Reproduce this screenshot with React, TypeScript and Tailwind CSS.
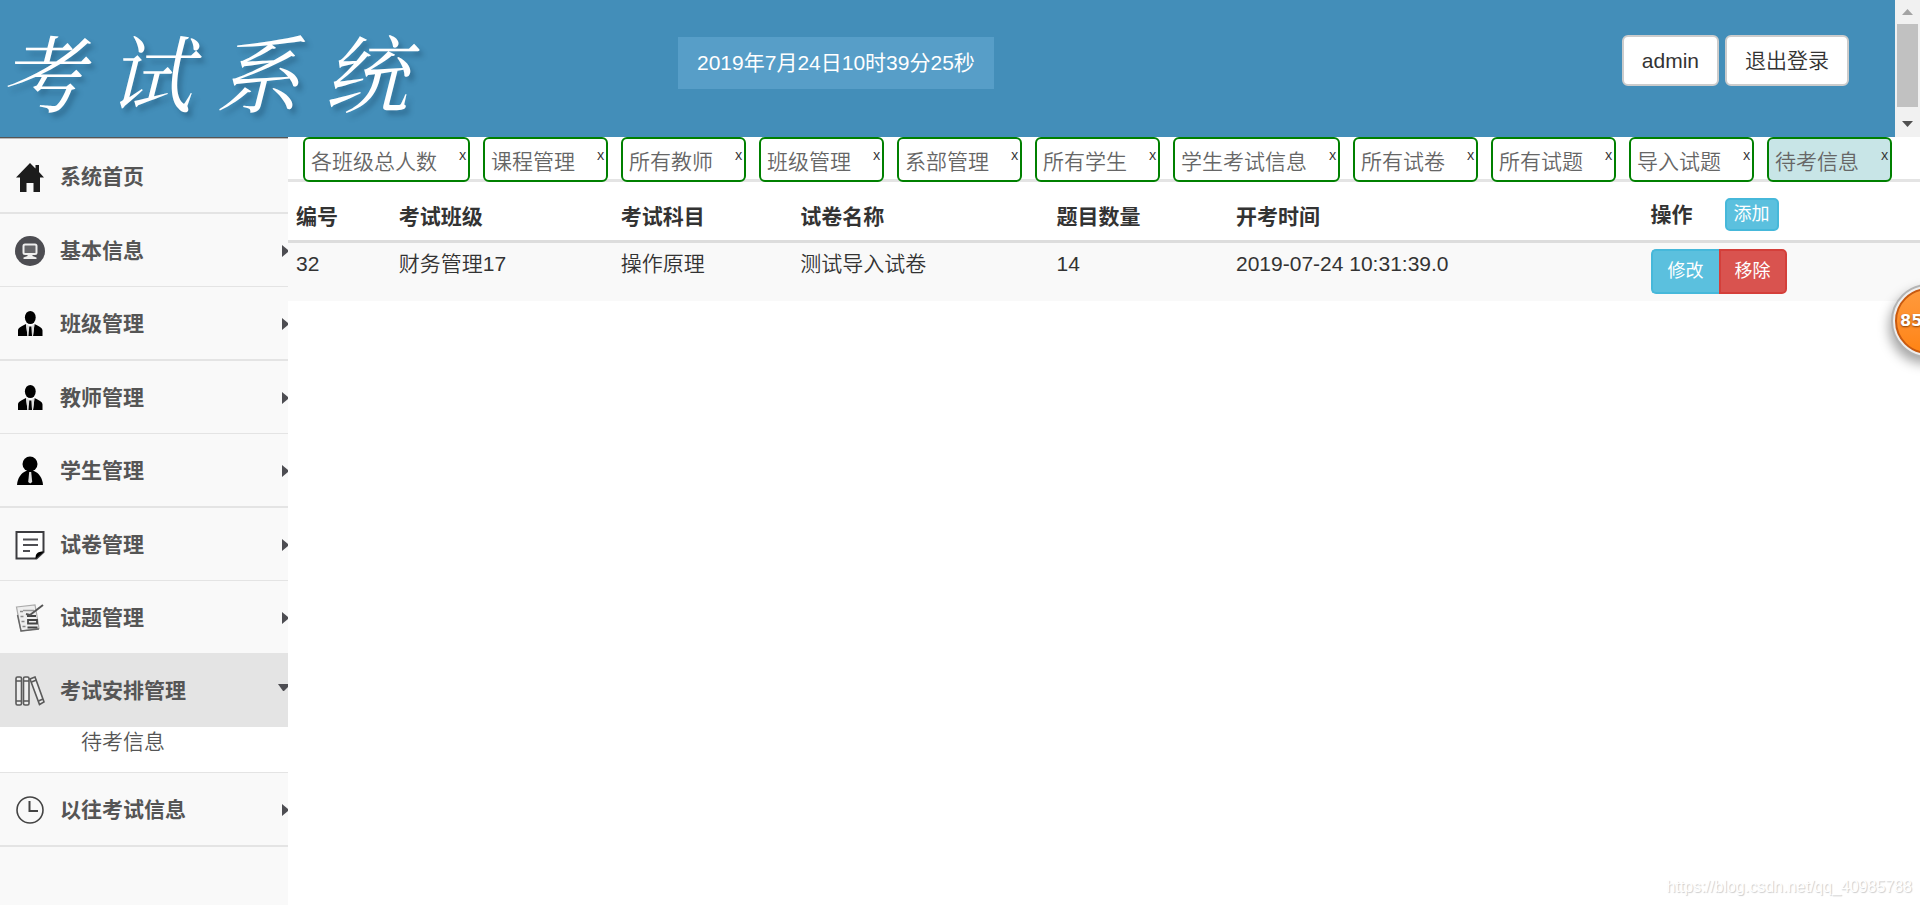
import { ReactNode } from "react";

const ink = "#4d4d52";

function HomeIcon() {
  return (
    <svg viewBox="0 0 30 30" className="size-[30px]" aria-hidden="true">
      <path d="M15 1 1 15.500h4V30h6.500v-9h7v9H25V15.500h4L24 10V3h-3.500v3.500z" fill="#1c1c1c" />
    </svg>
  );
}

function ComputerIcon() {
  return (
    <svg viewBox="0 0 30 30" className="size-[30px]" aria-hidden="true">
      <circle cx="15" cy="15" r="15" fill={ink} />
      <rect x="8.500" y="8.500" width="13" height="9.500" rx="1.500" fill="#66666a" stroke="#eee" strokeWidth="2" />
      <path d="M12.500 18h5v2l4 1.500V23h-13v-1.500l4-1.500z" fill="#eee" />
    </svg>
  );
}

function ManagerIcon() {
  return (
    <svg viewBox="0 0 30 30" className="size-[30px]" aria-hidden="true">
      <ellipse cx="15.300" cy="8.500" rx="5.400" ry="6.600" fill="#000" />
      <path d="M3 27v-5.500c0-3 4-4.500 8-6.500l1.500 12zM27.500 27v-5.500c0-3-4-4.500-8-6.500L18 27z" fill="#000" />
      <path d="m11 15 1.500 12H18l1.500-12-4 3z" fill="#ddd" />
      <path d="M14.300 17.500h2L17 27h-3.500z" fill="#000" />
    </svg>
  );
}

function StudentIcon() {
  return (
    <svg viewBox="0 0 30 30" className="size-[30px]" aria-hidden="true">
      <ellipse cx="15" cy="8" rx="7.500" ry="7.500" fill="#000" />
      <path d="M2 29c.5-7 4-12 9-14h8c5 2 8.500 7 9 14z" fill="#000" />
      <path d="M14.200 16h2l1 10-2 1.500-2-1.500z" fill="#ddd" />
    </svg>
  );
}

function PaperIcon() {
  return (
    <svg viewBox="0 0 30 30" className="size-[30px]" aria-hidden="true">
      <path d="M1.500 2h27v20l-7 6.500h-20z" fill="#fff" stroke="#3c3c40" strokeWidth="2" />
      <path d="M20.500 29c0-5 1-7.500 8.500-7.500z" fill="#000" />
      <path d="M8 9.500h15M8 15h15M8 21h7" stroke={ink} strokeWidth="2" />
    </svg>
  );
}

function QuestionIcon() {
  return (
    <svg viewBox="0 0 30 30" className="size-[30px]" aria-hidden="true" fill="none">
      <path d="M1.500 4 20 2l1.500 8 2.500 15.500L6 28z" fill="#eee" stroke="#aaa" strokeWidth="1.200" />
      <path d="M2.500 12 6 28l18-2" stroke="#666" strokeWidth="1.400" />
      <path d="M5 8.500h3M5.500 13.500h3M6.500 18.500h3M7.500 23.500h3" stroke="#888" strokeWidth="1.500" />
      <path d="M8 7.500h11" stroke="#999" strokeWidth="1.500" />
      <path d="M12 13h9M13 17h9v3.500h-9zM12.500 24.500h10" stroke="#444" strokeWidth="1.800" />
      <path d="m11 11 4 1 13-10" stroke="#555" strokeWidth="2" />
    </svg>
  );
}

function BooksIcon() {
  return (
    <svg viewBox="0 0 30 30" className="size-[30px]" aria-hidden="true" fill="#eee" stroke="#5a5a5a" strokeWidth="1.600">
      <rect x="1" y="1" width="5.500" height="28" rx="1.500" />
      <rect x="8.500" y="1" width="5.500" height="28" rx="1.500" />
      <path d="m15 3 5-2 9 25-4.500 2.500z" />
      <path d="M1 5h5.500M1 25h5.500M8.500 5H14M8.500 25H14M16.500 6l5-2M23.500 25l4.500-2" />
    </svg>
  );
}

function ClockIcon() {
  return (
    <svg viewBox="0 0 30 30" className="size-[30px]" aria-hidden="true" fill="none" stroke="#444">
      <circle cx="15" cy="15" r="13" strokeWidth="1.600" />
      <path d="M14.500 6v10H23" strokeWidth="2" />
    </svg>
  );
}

type Item = { label: string; icon: ReactNode; leaf?: boolean; open?: boolean };

const items: Item[] = [
  { label: "系统首页", icon: <HomeIcon />, leaf: true },
  { label: "基本信息", icon: <ComputerIcon /> },
  { label: "班级管理", icon: <ManagerIcon /> },
  { label: "教师管理", icon: <ManagerIcon /> },
  { label: "学生管理", icon: <StudentIcon /> },
  { label: "试卷管理", icon: <PaperIcon /> },
  { label: "试题管理", icon: <QuestionIcon /> },
  { label: "考试安排管理", icon: <BooksIcon />, open: true },
  { label: "以往考试信息", icon: <ClockIcon /> },
];

const tabs = [
  "各班级总人数",
  "课程管理",
  "所有教师",
  "班级管理",
  "系部管理",
  "所有学生",
  "学生考试信息",
  "所有试卷",
  "所有试题",
  "导入试题",
  "待考信息",
];

function MenuItem({ label, icon, leaf, open }: Item) {
  return (
    <li className="odd:[&>a]:h-[74px] odd:[&>a]:border-b-2 even:[&>a]:border-b">
      <a
        href="#"
        className={
          open
            ? "flex h-[72px] items-center border-[#e4e4e4] bg-[#e4e4e4] pt-px pl-[15px] font-bold text-[#555]"
            : "flex h-[73px] items-center border-[#e4e4e4] pt-px pl-[15px] font-bold text-[#555]"
        }
      >
        {icon}
        <span className="ml-[15px] grow">{label}</span>
        {!leaf && !open && (
          <svg viewBox="0 0 6 12" className="h-3 w-1.5" aria-hidden="true">
            <path d="M0 0 6 5v2L0 12z" fill={ink} />
          </svg>
        )}
        {open && (
          <svg viewBox="0 0 10 7" className="mb-2 h-[7px] w-2.5" aria-hidden="true">
            <path d="M0 0h10v3L6 7H5z" fill={ink} />
          </svg>
        )}
      </a>
      {open && (
        <a href="#" className="block h-[46px] border-[#e4e4e4] bg-white pl-[81px] leading-[30px] text-[#555]">
          待考信息
        </a>
      )}
    </li>
  );
}

export default function App() {
  return (
    <div className="flex min-h-screen flex-col bg-white font-['Liberation_Sans','Noto_Sans_CJK_SC',sans-serif] text-[21px] leading-[30px] font-[350] text-[#333]">
      <header className="flex h-[137px] bg-[#438eb9]">
        <div className="grid grow grid-cols-[678px_auto_1fr] items-start">
          <h1
            aria-label="考试系统"
            className="flex gap-6 pt-2.5 font-['Noto_Serif_CJK_SC','Noto_Sans_CJK_SC',serif] text-[84px] leading-[120px] font-normal text-white italic [text-shadow:4px_5px_5px_rgba(20,60,90,0.35)]"
          >
            <span>考</span>
            <span>试</span>
            <span>系</span>
            <span>统</span>
          </h1>
          <time className="mt-[37px] bg-[#579ec8] px-[19px] py-[11px] font-normal text-white">
            2019年7月24日10时39分25秒
          </time>
          <div className="mt-[35px] mr-[46px] flex justify-end gap-1.5">
            <button className="h-[51px] rounded-md border-2 border-[#ccc] bg-white px-[18px]">admin</button>
            <button className="h-[51px] rounded-md border-2 border-[#ccc] bg-white px-[18px]">退出登录</button>
          </div>
        </div>
        <div className="flex w-[25px] flex-col items-center bg-[#f1f1f1]" aria-hidden="true">
          <svg viewBox="0 0 25 24" className="h-6 w-[25px]">
            <path d="m12.500 9 5.500 6H7z" fill="#a3a3a3" />
          </svg>
          <div className="w-[21px] grow bg-[#c1c1c1]" />
          <svg viewBox="0 0 25 30" className="h-[30px] w-[25px]">
            <path d="m12.500 20 5.500-6H7z" fill="#505050" />
          </svg>
        </div>
      </header>

      <div className="flex grow">
        <nav className="w-[288px] shrink-0 border-t border-[#555] bg-[#f9f9f9]">
          <ul className="border-t border-[#bbb] pt-px">
            {items.map((item) => (
              <MenuItem key={item.label} {...item} />
            ))}
          </ul>
        </nav>

        <main className="min-w-0 grow">
          <div className="relative flex gap-[13px] pl-[15px] before:absolute before:inset-x-0 before:bottom-0 before:h-[3px] before:bg-[#e4e4e4]">
            {tabs.map((tab, i) => (
              <div
                key={tab}
                className={
                  i === tabs.length - 1
                    ? "relative flex h-[45px] items-start rounded-md border-2 border-[#008000] bg-[#c8e5e7] pt-2 pl-1.5"
                    : "relative flex h-[45px] items-start rounded-md border-2 border-[#008000] bg-white pt-2 pl-1.5"
                }
              >
                <a href="#" className="pr-[22px] whitespace-nowrap text-[#666]">
                  {tab}
                </a>
                <button
                  aria-label={"关闭" + tab}
                  className="w-[9px] text-left font-['Noto_Sans_CJK_SC',sans-serif] text-[15px] leading-[14px] text-[#333]"
                >
                  x
                </button>
              </div>
            ))}
          </div>

          <table className="mt-2 w-full table-fixed text-left">
            <colgroup>
              <col className="w-[6.3%]" />
              <col className="w-[13.6%]" />
              <col className="w-[11%]" />
              <col className="w-[15.7%]" />
              <col className="w-[11%]" />
              <col className="w-[25.4%]" />
              <col className="w-[17%]" />
            </colgroup>
            <thead>
              <tr className="h-[51px] border-b-[3px] border-[#ddd]">
                {["编号", "考试班级", "考试科目", "试卷名称", "题目数量", "开考时间"].map((h) => (
                  <th key={h} className="px-2 pt-1 font-bold">
                    {h}
                  </th>
                ))}
                <th className="px-2 font-bold">
                  <div className="flex items-center gap-8">
                    操作
                    <button className="h-[33px] rounded-[5px] border-2 border-[#46b8da] bg-[#5bc0de] px-[7px] text-[18px] leading-[27px] font-normal text-white">
                      添加
                    </button>
                  </div>
                </th>
              </tr>
            </thead>
            <tbody>
              <tr className="h-[60px] bg-[#f9f9f9] align-top">
                {["32", "财务管理17", "操作原理", "测试导入试卷", "14", "2019-07-24 10:31:39.0"].map((c) => (
                  <td key={c} className="px-2 pt-1.5">
                    {c}
                  </td>
                ))}
                <td className="px-2 pt-1.5">
                  <div className="flex font-normal text-white">
                    <button className="h-[45px] w-[68px] rounded-l-[5px] border-2 border-r-0 border-[#46b8da] bg-[#5bc0de] text-[18px]">
                      修改
                    </button>
                    <button className="h-[45px] w-[68px] rounded-r-[5px] border-2 border-[#d43f3a] bg-[#d9534f] text-[18px]">
                      移除
                    </button>
                  </div>
                </td>
              </tr>
            </tbody>
          </table>
        </main>
      </div>

      <div className="absolute top-[274px] right-0 h-[110px] w-[50px] overflow-hidden">
        <div className="absolute top-2.5 left-[21px] flex size-[74px] items-center rounded-full border-2 border-[#b4b4b4] bg-[#eee] p-0.5 shadow-[-2px_6px_12px_rgba(0,0,0,0.35)]">
          <div className="flex size-full items-center rounded-full border-2 border-[#c85a10] bg-linear-to-b from-[#ff9a3c] to-[#ff8412] pl-[3px] font-['DejaVu_Sans',sans-serif] text-[16px] font-bold text-white [text-shadow:0_1px_2px_rgba(120,50,0,0.9)]">
            85
          </div>
        </div>
      </div>

      <div className="absolute right-2 bottom-1.5 text-[16px] leading-6 text-white [text-shadow:1px_1px_1px_#ccc]">
        https://blog.csdn.net/qq_40985788
      </div>
    </div>
  );
}
